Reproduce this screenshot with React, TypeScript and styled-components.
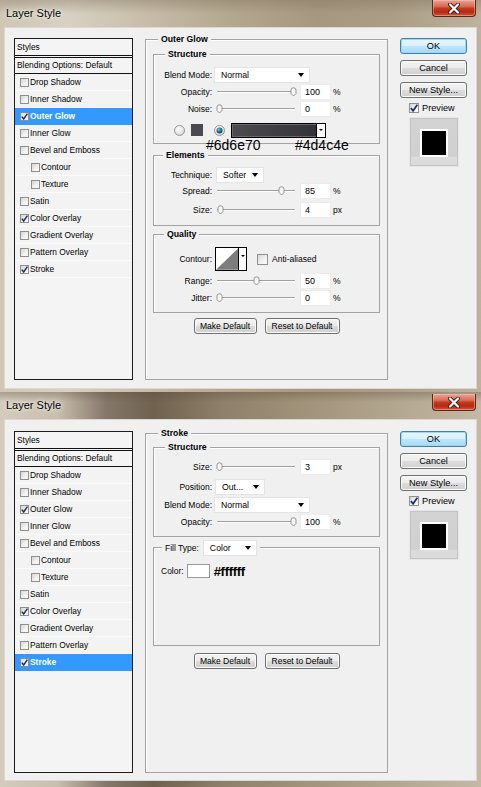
import React from 'react';
import styled, { createGlobalStyle } from 'styled-components';

const Global = createGlobalStyle`
  html, body { margin: 0; padding: 0; }
  body {
    width: 481px; height: 787px; overflow: hidden;
    background: #8c7e68;
    font-family: "Liberation Sans", Arial, sans-serif;
    color: #000;
  }
`;

const Page = styled.div`
  width: 481px;
  height: 787px;
  display: flex;
  flex-direction: column;
  overflow: hidden;
`;

const Window = styled.div<{ $h: number; $pb: number; $tone: 'glow' | 'stroke' }>`
  height: ${p => p.$h}px;
  box-sizing: border-box;
  padding: 0 4px ${p => p.$pb}px;
  display: flex;
  flex-direction: column;
  background: ${p =>
    p.$tone === 'glow'
      ? `linear-gradient(180deg, rgba(120,105,85,0.35) 0px, rgba(0,0,0,0) 14px),
         linear-gradient(90deg, #cfc6b3 0%, #d8d1c2 14%, #c7bda9 30%, #b4a78f 48%, #a69880 66%, #ac9e86 82%, #bdb29e 100%)`
      : `linear-gradient(180deg, rgba(90,75,55,0.35) 0px, rgba(0,0,0,0) 10px),
         linear-gradient(90deg, #d3cbbd 0%, #c9bfae 12%, #85776a 22%, #6f614d 32%, #8d7f69 46%, #a09179 62%, #b1a48d 80%, #c4b9a5 100%)`};
`;

const TitleBar = styled.div`
  height: 27px;
  flex: none;
  display: flex;
  justify-content: space-between;
  align-items: flex-start;
  padding-left: 2px;
`;

const TitleText = styled.span`
  font-size: 11px;
  line-height: 27px;
  color: #000;
  text-shadow: 0 0 6px rgba(255, 255, 255, 0.9), 0 0 3px rgba(255, 255, 255, 0.8);
`;

const CloseButton = styled.div<{ $mt: number }>`
  margin-top: ${p => p.$mt}px;
  margin-right: 1px;
  width: 44px;
  height: 17px;
  box-sizing: border-box;
  border: 1px solid #5e2418;
  border-top: none;
  border-radius: 0 0 4px 4px;
  background: linear-gradient(180deg, #e9a597 0%, #d66b54 40%, #c33a1e 52%, #b52a10 75%, #d2573a 100%);
  box-shadow: inset 0 0 0 1px rgba(255, 200, 190, 0.45);
  display: flex;
  align-items: center;
  justify-content: center;
`;

const Client = styled.div<{ $pt: number }>`
  height: 362px;
  flex: none;
  box-sizing: border-box;
  background: #f0f0f0;
  box-shadow: inset 0 0 0 1px #dcd8d0;
  padding: ${p => p.$pt}px 10px 0;
  display: flex;
  align-items: flex-start;
  gap: 12px;
`;

/* ---------- left styles list ---------- */

const StyleList = styled.div`
  width: 119px;
  height: 342px;
  box-sizing: border-box;
  border: 1px solid #1c1c1c;
  background: #f4f4f4;
  display: flex;
  flex-direction: column;
  font-size: 8.4px;
`;

const ListHead = styled.div`
  height: 16px;
  line-height: 16px;
  padding-left: 2px;
  border-bottom: 1px solid #111;
`;

const ListBlend = styled.div`
  margin-top: 1px;
  height: 17px;
  box-sizing: border-box;
  line-height: 15px;
  padding-left: 2px;
  border-top: 1px solid #111;
  border-bottom: 1px solid #111;
`;

const ListRow = styled.div<{ $sel?: boolean; $sub?: boolean }>`
  height: 17px;
  box-sizing: border-box;
  display: flex;
  align-items: center;
  gap: 1px;
  padding-left: ${p => (p.$sub ? 16 : 5)}px;
  background: ${p => (p.$sel ? '#3399ff' : '#f3f3f3')};
  border-bottom: 1px solid ${p => (p.$sel ? '#3399ff' : '#fbfbfb')};
  color: ${p => (p.$sel ? '#fff' : '#000')};
  font-weight: ${p => (p.$sel ? 700 : 400)};
`;

const CheckBox = styled.span<{ $size?: number }>`
  width: ${p => p.$size ?? 9}px;
  height: ${p => p.$size ?? 9}px;
  flex: none;
  box-sizing: border-box;
  border: 1px solid #8e8f8f;
  background: linear-gradient(135deg, #d6d6d6 0%, #f2f2f2 60%, #fbfbfb 100%);
  display: flex;
  align-items: center;
  justify-content: center;
  overflow: visible;
  & svg { display: block; overflow: visible; }
`;

function Check({ checked, size }: { checked?: boolean; size?: number }) {
  const s = (size ?? 9) - 2;
  return (
    <CheckBox $size={size}>
      {checked && (
        <svg width={s} height={s} viewBox="0 0 7 7">
          <path d="M0.8 3.6 L2.7 6 L6.4 0.6" stroke="#1e2f63" strokeWidth="1.5" fill="none" />
        </svg>
      )}
    </CheckBox>
  );
}

type Item = { label: string; checked?: boolean; sub?: boolean };
const ITEMS: Item[] = [
  { label: 'Drop Shadow' },
  { label: 'Inner Shadow' },
  { label: 'Outer Glow', checked: true },
  { label: 'Inner Glow' },
  { label: 'Bevel and Emboss' },
  { label: 'Contour', sub: true },
  { label: 'Texture', sub: true },
  { label: 'Satin' },
  { label: 'Color Overlay', checked: true },
  { label: 'Gradient Overlay' },
  { label: 'Pattern Overlay' },
  { label: 'Stroke', checked: true },
];

function StylesPanel({ selected }: { selected: string }) {
  return (
    <StyleList>
      <ListHead>Styles</ListHead>
      <ListBlend>Blending Options: Default</ListBlend>
      {ITEMS.map(it => (
        <ListRow key={it.label} $sel={it.label === selected} $sub={it.sub}>
          <Check checked={it.checked} />
          <span>{it.label}</span>
        </ListRow>
      ))}
    </StyleList>
  );
}

/* ---------- group boxes & form ---------- */

const GroupBox = styled.div<{ $h: number; $mt?: number; $pt?: number; $px?: number; $w?: number }>`
  position: relative;
  box-sizing: border-box;
  ${p => (p.$w ? `width: ${p.$w}px;` : '')}
  height: ${p => p.$h}px;
  margin-top: ${p => p.$mt ?? 0}px;
  padding: ${p => p.$pt ?? 0}px ${p => p.$px ?? 0}px 0;
  border: 1px solid #a3a3a3;
  box-shadow: inset 1px 1px 0 #ffffff;
  display: flex;
  flex-direction: column;
  flex: none;
`;

const Legend = styled.div<{ $left: number; $top?: number; $lh?: number }>`
  position: absolute;
  top: ${p => p.$top ?? -7}px;
  left: ${p => p.$left}px;
  padding: 0 3px;
  background: #f0f0f0;
  font-weight: 700;
  font-size: 8.7px;
  line-height: ${p => p.$lh ?? 12}px;
  display: flex;
  align-items: center;
`;

const FillLegend = styled(Legend)`
  font-weight: 400;
  font-size: 8.5px;
`;

const FormRow = styled.div<{ $h?: number; $mt?: number; $pl?: number }>`
  display: flex;
  align-items: center;
  height: ${p => p.$h ?? 16}px;
  margin-top: ${p => p.$mt ?? 0}px;
  padding-left: ${p => p.$pl ?? 0}px;
  font-size: 8.5px;
  flex: none;
`;

const FieldLabel = styled.span`
  width: 58px;
  flex: none;
  text-align: right;
`;

const Dropdown = styled.div<{ $w: number; $ml?: number }>`
  width: ${p => p.$w}px;
  height: 16px;
  margin-left: ${p => p.$ml ?? 0}px;
  box-sizing: border-box;
  background: #fff;
  border: 1px solid #e4e4e4;
  padding: 0 5px 0 6px;
  display: flex;
  align-items: center;
  justify-content: space-between;
  font-size: 8.7px;
  font-weight: 400;
  flex: none;
`;

const Caret = styled.span<{ $s?: number }>`
  width: 0;
  height: 0;
  border-left: ${p => (p.$s ?? 7) / 2}px solid transparent;
  border-right: ${p => (p.$s ?? 7) / 2}px solid transparent;
  border-top: ${p => ((p.$s ?? 7) * 4) / 7}px solid #000;
  flex: none;
`;

const SliderBox = styled.div`
  position: relative;
  width: 82px;
  height: 16px;
  margin-left: 3px;
  flex: none;
`;

const Track = styled.div`
  position: absolute;
  left: 2px;
  right: 2px;
  top: 7px;
  height: 1px;
  background: #a0a0a0;
  box-shadow: 0 1px 0 #ffffff;
`;

const ThumbWrap = styled.div`
  position: absolute;
  top: 3px;
  width: 7px;
  height: 10px;
  & svg { display: block; }
`;

const NumField = styled.div`
  width: 31px;
  height: 16px;
  margin-left: 3px;
  box-sizing: border-box;
  background: #fff;
  border: 1px solid #ebebeb;
  padding-left: 4px;
  display: flex;
  align-items: center;
  font-size: 9px;
  flex: none;
`;

const Unit = styled.span`
  margin-left: 2px;
  font-size: 8.5px;
`;

function SliderRow({ label, value, pct, unit, mt }: { label: string; value: string; pct: number; unit: string; mt?: number }) {
  const center = 4 + pct * 74;
  return (
    <FormRow $mt={mt}>
      <FieldLabel>{label}</FieldLabel>
      <SliderBox>
        <Track />
        <ThumbWrap style={{ left: `${center - 3.5}px` }}>
          <svg width="7" height="10" viewBox="0 0 7 10">
            <path d="M1 3 Q1 0.8 3.5 0.8 Q6 0.8 6 3 L6 6.5 L3.5 9 L1 6.5 Z" fill="#f6f6f6" stroke="#8a8a8a" strokeWidth="0.9" />
          </svg>
        </ThumbWrap>
      </SliderBox>
      <NumField>{value}</NumField>
      <Unit>{unit}</Unit>
    </FormRow>
  );
}

const Radio = styled.span<{ $ml?: number }>`
  margin-left: ${p => p.$ml ?? 0}px;
  width: 11px;
  height: 11px;
  flex: none;
  & svg { display: block; }
`;

function RadioDot({ on, ml }: { on?: boolean; ml?: number }) {
  return (
    <Radio $ml={ml}>
      <svg width="11" height="11" viewBox="0 0 11 11">
        <defs>
          <radialGradient id={on ? 'rOn' : 'rOff'} cx="0.4" cy="0.35" r="0.7">
            <stop offset="0" stopColor="#ffffff" />
            <stop offset="1" stopColor="#d4d4d4" />
          </radialGradient>
          <radialGradient id="dotG" cx="0.4" cy="0.35" r="0.7">
            <stop offset="0" stopColor="#7fc7e8" />
            <stop offset="0.5" stopColor="#2a6f93" />
            <stop offset="1" stopColor="#123a52" />
          </radialGradient>
        </defs>
        <circle cx="5.5" cy="5.5" r="5" fill={`url(#${on ? 'rOn' : 'rOff'})`} stroke="#8c8c8c" strokeWidth="0.9" />
        {on && <circle cx="5.5" cy="5.5" r="3" fill="url(#dotG)" />}
      </svg>
    </Radio>
  );
}

const Swatch = styled.span<{ $c: string; $w: number; $h: number; $ml?: number; $b?: string }>`
  width: ${p => p.$w}px;
  height: ${p => p.$h}px;
  margin-left: ${p => p.$ml ?? 0}px;
  box-sizing: border-box;
  background: ${p => p.$c};
  border: 1px solid ${p => p.$b ?? p.$c};
  flex: none;
`;

const GradientBar = styled.div`
  margin-left: 6px;
  width: 95px;
  height: 15px;
  box-sizing: border-box;
  border: 1px solid #000;
  background: linear-gradient(90deg, #4c4b50 0%, #414045 40%, #36353a 80%, #303034 100%);
  box-shadow: inset 0 0 0 1px #6a696e;
  display: flex;
  justify-content: flex-end;
  flex: none;
`;

const BarArrow = styled.div`
  width: 8px;
  height: 100%;
  background: #fff;
  border-left: 1px solid #000;
  display: flex;
  align-items: center;
  justify-content: center;
`;

const Annotation = styled.span<{ $left: number; $top: number }>`
  position: absolute;
  left: ${p => p.$left}px;
  top: ${p => p.$top}px;
  font-family: "Liberation Sans", Arial, sans-serif;
  font-size: 14px;
  line-height: 14px;
  color: #000;
  white-space: nowrap;
`;

const HexText = styled.span`
  margin-left: 4px;
  font-size: 13px;
  font-weight: 700;
  letter-spacing: -0.3px;
`;

const ContourPicker = styled.div`
  margin-left: 3px;
  width: 32px;
  height: 24px;
  box-sizing: border-box;
  border: 1px solid #000;
  background: #fff;
  display: flex;
  flex: none;
  & svg { display: block; }
`;

const ContourArrow = styled.div`
  width: 8px;
  border-left: 1px solid #000;
  display: flex;
  justify-content: center;
  padding-top: 7px;
  box-sizing: border-box;
`;

const SmallLabel = styled.span<{ $ml?: number }>`
  margin-left: ${p => p.$ml ?? 0}px;
`;

const ButtonRow = styled.div<{ $mt: number }>`
  margin-top: ${p => p.$mt}px;
  display: flex;
  justify-content: center;
  gap: 8px;
  flex: none;
`;

const PushButton = styled.div<{ $w: number; $primary?: boolean; $fs?: number }>`
  width: ${p => p.$w}px;
  height: 16px;
  box-sizing: border-box;
  border: 1px solid ${p => (p.$primary ? '#3c7fb1' : '#707070')};
  border-radius: 3px;
  background: ${p =>
    p.$primary
      ? 'linear-gradient(180deg, #eaf6fd 0%, #d9f0fc 50%, #bee6fd 51%, #a7d9f5 100%)'
      : 'linear-gradient(180deg, #f4f4f4 0%, #ebebeb 50%, #dddddd 51%, #cfcfcf 100%)'};
  box-shadow: ${p => (p.$primary ? 'inset 0 0 0 1px #9fd8f2' : 'inset 0 0 0 1px #fbfbfb')};
  display: flex;
  align-items: center;
  justify-content: center;
  font-size: ${p => p.$fs ?? 8.5}px;
  flex: none;
`;

/* ---------- right column ---------- */

const SideCol = styled.div`
  width: 67px;
  display: flex;
  flex-direction: column;
  flex: none;
`;

const SideButton = styled(PushButton)<{ $mt?: number }>`
  margin-top: ${p => p.$mt ?? 0}px;
`;

const PreviewRow = styled.div`
  margin-top: 4px;
  height: 12px;
  padding-left: 9px;
  display: flex;
  align-items: center;
  gap: 3px;
  font-size: 9.2px;
`;

const PreviewBox = styled.div`
  margin: 3px 0 0 9px;
  width: 50px;
  height: 50px;
  box-sizing: border-box;
  background: linear-gradient(180deg, #d3d3d3 0%, #d0d0d0 80%, #dcdcdc 81%, #dadada 100%);
  border: 1px solid #e6e6e6;
  box-shadow: inset 0 0 0 1px #c4c4c4;
  display: flex;
  align-items: center;
  justify-content: center;
`;

const PreviewSquare = styled.div`
  width: 24px;
  height: 24px;
  background: #000;
  border: 2px solid #fff;
  margin-top: 1px;
`;

function SideColumn() {
  return (
    <SideCol>
      <SideButton $w={67} $primary $fs={9.2}>OK</SideButton>
      <SideButton $w={67} $mt={6} $fs={9.2}>Cancel</SideButton>
      <SideButton $w={67} $mt={6} $fs={9.2}>New Style...</SideButton>
      <PreviewRow>
        <Check checked size={10} />
        <span>Preview</span>
      </PreviewRow>
      <PreviewBox>
        <PreviewSquare />
      </PreviewBox>
    </SideCol>
  );
}

/* ---------- panels ---------- */

function GlowContent() {
  return (
    <>
      <GroupBox $h={90} $pt={12}>
        <Legend $left={11}>Structure</Legend>
        <FormRow>
          <FieldLabel>Blend Mode:</FieldLabel>
          <Dropdown $w={96} $ml={2}>Normal<Caret /></Dropdown>
        </FormRow>
        <SliderRow label="Opacity:" value="100" pct={1} unit="%" mt={1} />
        <SliderRow label="Noise:" value="0" pct={0} unit="%" mt={1} />
        <FormRow $h={18} $mt={4} $pl={20}>
          <RadioDot />
          <Swatch $c="#4b4a50" $w={12} $h={12} $ml={6} />
          <RadioDot on ml={11} />
          <GradientBar>
            <BarArrow><Caret $s={5} /></BarArrow>
          </GradientBar>
        </FormRow>
        <Annotation $left={52} $top={83}>#6d6e70</Annotation>
        <Annotation $left={141} $top={83}>#4d4c4e</Annotation>
      </GroupBox>

      <GroupBox $h={71} $mt={11} $pt={11}>
        <Legend $left={9}>Elements</Legend>
        <FormRow>
          <FieldLabel>Technique:</FieldLabel>
          <Dropdown $w={48} $ml={4}>Softer<Caret /></Dropdown>
        </FormRow>
        <SliderRow label="Spread:" value="85" pct={0.85} unit="%" />
        <SliderRow label="Size:" value="4" pct={0.025} unit="px" mt={3} />
      </GroupBox>

      <GroupBox $h={79} $mt={8} $pt={10}>
        <Legend $left={10}>Quality</Legend>
        <FormRow $h={28}>
          <FieldLabel>Contour:</FieldLabel>
          <ContourPicker>
            <svg width="23" height="22" viewBox="0 0 23 22">
              <polygon points="0,22 23,0 23,22" fill="#7d7d7d" />
            </svg>
            <ContourArrow><Caret $s={5} /></ContourArrow>
          </ContourPicker>
          <SmallLabel $ml={10}><Check size={11} /></SmallLabel>
          <SmallLabel $ml={4}>Anti-aliased</SmallLabel>
        </FormRow>
        <SliderRow label="Range:" value="50" pct={0.5} unit="%" />
        <SliderRow label="Jitter:" value="0" pct={0} unit="%" mt={1} />
      </GroupBox>

      <ButtonRow $mt={5}>
        <PushButton $w={63}>Make Default</PushButton>
        <PushButton $w={75}>Reset to Default</PushButton>
      </ButtonRow>
    </>
  );
}

function StrokeContent() {
  return (
    <>
      <GroupBox $h={90} $pt={11}>
        <Legend $left={11}>Structure</Legend>
        <SliderRow label="Size:" value="3" pct={0} unit="px" />
        <FormRow $mt={4}>
          <FieldLabel>Position:</FieldLabel>
          <Dropdown $w={50} $ml={3}>Out...<Caret /></Dropdown>
        </FormRow>
        <FormRow $mt={2}>
          <FieldLabel>Blend Mode:</FieldLabel>
          <Dropdown $w={96} $ml={2}>Normal<Caret /></Dropdown>
        </FormRow>
        <SliderRow label="Opacity:" value="100" pct={1} unit="%" mt={1} />
      </GroupBox>

      <GroupBox $h={99} $mt={10} $pt={15}>
        <FillLegend $left={8} $top={-8} $lh={16}>
          <span>Fill Type:</span>
          <Dropdown $w={54} $ml={4}>Color<Caret /></Dropdown>
        </FillLegend>
        <FormRow $pl={7}>
          <span>Color:</span>
          <Swatch $c="#ffffff" $b="#9a9a9a" $w={23} $h={14} $ml={3} />
          <HexText>#ffffff</HexText>
        </FormRow>
      </GroupBox>

      <ButtonRow $mt={7}>
        <PushButton $w={63}>Make Default</PushButton>
        <PushButton $w={75}>Reset to Default</PushButton>
      </ButtonRow>
    </>
  );
}

function CloseIcon() {
  return (
    <svg width="14" height="11" viewBox="0 0 14 11">
      <path d="M3 1.5 L11 9.5 M11 1.5 L3 9.5" stroke="#4a1a10" strokeWidth="4" strokeLinecap="round" />
      <path d="M3 1.5 L11 9.5 M11 1.5 L3 9.5" stroke="#ffffff" strokeWidth="2.2" strokeLinecap="round" />
    </svg>
  );
}

function Dialog({ variant }: { variant: 'glow' | 'stroke' }) {
  const glow = variant === 'glow';
  return (
    <Window $h={glow ? 392 : 395} $pb={glow ? 3 : 6} $tone={variant}>
      <TitleBar>
        <TitleText>Layer Style</TitleText>
        <CloseButton $mt={glow ? 0 : 2}>
          <CloseIcon />
        </CloseButton>
      </TitleBar>
      <Client $pt={glow ? 11 : 12}>
        <StylesPanel selected={glow ? 'Outer Glow' : 'Stroke'} />
        <GroupBox $w={243} $h={glow ? 341 : 340} $mt={glow ? 1 : 2} $pt={glow ? 14 : 13} $px={7}>
          <Legend $left={12}>{glow ? 'Outer Glow' : 'Stroke'}</Legend>
          {glow ? <GlowContent /> : <StrokeContent />}
        </GroupBox>
        <SideColumn />
      </Client>
    </Window>
  );
}

export default function App() {
  return (
    <>
      <Global />
      <Page>
        <Dialog variant="glow" />
        <Dialog variant="stroke" />
      </Page>
    </>
  );
}
